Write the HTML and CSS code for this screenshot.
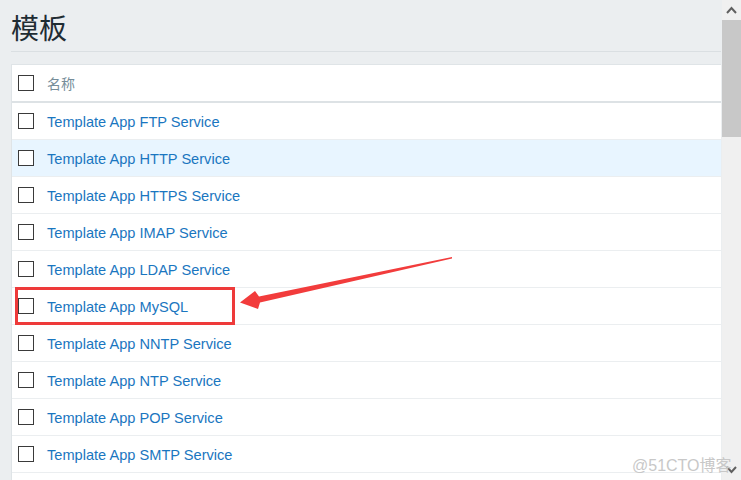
FILE: index.html
```html
<!DOCTYPE html>
<html lang="zh">
<head>
<meta charset="utf-8">
<title>模板</title>
<link rel="stylesheet" href="styles.css">
</head>
<body>
<div class="app">
  <div class="main">
    <h1 class="title">模板</h1>
    <div class="table">
      <div class="row head">
        <span class="cb"></span>
        <span class="col-name">名称</span>
      </div>
      <div class="row"><span class="cb"></span><a class="link">Template App FTP Service</a></div>
      <div class="row hover"><span class="cb"></span><a class="link">Template App HTTP Service</a></div>
      <div class="row"><span class="cb"></span><a class="link">Template App HTTPS Service</a></div>
      <div class="row"><span class="cb"></span><a class="link">Template App IMAP Service</a></div>
      <div class="row"><span class="cb"></span><a class="link">Template App LDAP Service</a></div>
      <div class="row"><span class="cb"></span><a class="link">Template App MySQL</a></div>
      <div class="row"><span class="cb"></span><a class="link">Template App NNTP Service</a></div>
      <div class="row"><span class="cb"></span><a class="link">Template App NTP Service</a></div>
      <div class="row"><span class="cb"></span><a class="link">Template App POP Service</a></div>
      <div class="row"><span class="cb"></span><a class="link">Template App SMTP Service</a></div>
      <div class="row"></div>
    </div>
  </div>
  <div class="scrollbar">
    <div class="sb-btn">
      <svg width="11" height="8" viewBox="0 0 11 8"><path d="M1 7 L5.5 2 L10 7" fill="none" stroke="#606060" stroke-width="2"/></svg>
    </div>
    <div class="sb-thumb"></div>
    <div class="sb-track"></div>
    <div class="sb-btn">
      <svg width="11" height="8" viewBox="0 0 11 8"><path d="M1 1 L5.5 6 L10 1" fill="none" stroke="#606060" stroke-width="2"/></svg>
    </div>
  </div>
</div>
<div class="highlight-box"></div>
<svg class="annot" width="741" height="480" viewBox="0 0 741 480">
  <polygon points="452,257 259,296.5 255,291 240,302.5 258,309 260,302.5 452,258.5" fill="#f23c3c"/>
</svg>
<div class="watermark">@51CTO博客</div>
</body>
</html>
```
FILE: styles.css
```css
html, body {
  margin: 0;
  padding: 0;
  height: 480px;
  overflow: hidden;
}
body {
  background: #ebeef0;
  font-family: "Liberation Sans", Arial, "Noto Sans CJK SC", sans-serif;
  position: relative;
}
.app {
  display: flex;
  height: 480px;
}
.main {
  flex: 1;
  padding-left: 11px;
  padding-right: 1px;
  overflow: hidden;
}
.title {
  margin: 0;
  height: 52px;
  display: flex;
  align-items: center;
  font-family: "Noto Sans CJK SC", sans-serif;
  font-weight: 400;
  font-size: 28px;
  color: #1f2c33;
  border-bottom: 1px solid #dadfe2;
  margin-bottom: 12px;
  padding-top: 2px;
  box-sizing: border-box;
}
.table {
  background: #fff;
  border-top: 1px solid #dfe4e7;
  border-left: 1px solid #dfe4e7;
}
.row {
  display: flex;
  align-items: center;
  height: 36px;
  border-bottom: 1px solid #ebeef0;
  padding-left: 6px;
  gap: 13px;
}
.row.head {
  border-bottom: 2px solid #dde2e5;
}
.row.hover {
  background: #e8f5ff;
}
.cb {
  width: 16px;
  height: 16px;
  box-sizing: border-box;
  border: 1px solid #3a3a3a;
  background: #fff;
  flex: none;
}
.col-name {
  font-family: "Noto Sans CJK SC", sans-serif;
  font-size: 14px;
  color: #768d99;
}
.link {
  font-size: 14.6px;
  color: #1a76c0;
  text-decoration: none;
  padding-top: 1px;
}
.scrollbar {
  width: 19px;
  flex: none;
  background: #f0f0f0;
  display: flex;
  flex-direction: column;
}
.sb-btn {
  height: 20px;
  display: flex;
  align-items: center;
  justify-content: center;
}
.sb-thumb {
  height: 117px;
  background: #c8c8c8;
}
.sb-track {
  flex: 1;
}
.highlight-box {
  position: absolute;
  left: 15px;
  top: 287px;
  width: 220px;
  height: 38px;
  box-sizing: border-box;
  border: 3px solid #ee3a3a;
}
.annot {
  position: absolute;
  left: 0;
  top: 0;
  pointer-events: none;
}
.watermark {
  position: absolute;
  left: 632px;
  top: 452px;
  font-family: "Liberation Sans", "Noto Sans CJK SC", sans-serif;
  font-size: 16px;
  color: #c8c8c8;
}
```
